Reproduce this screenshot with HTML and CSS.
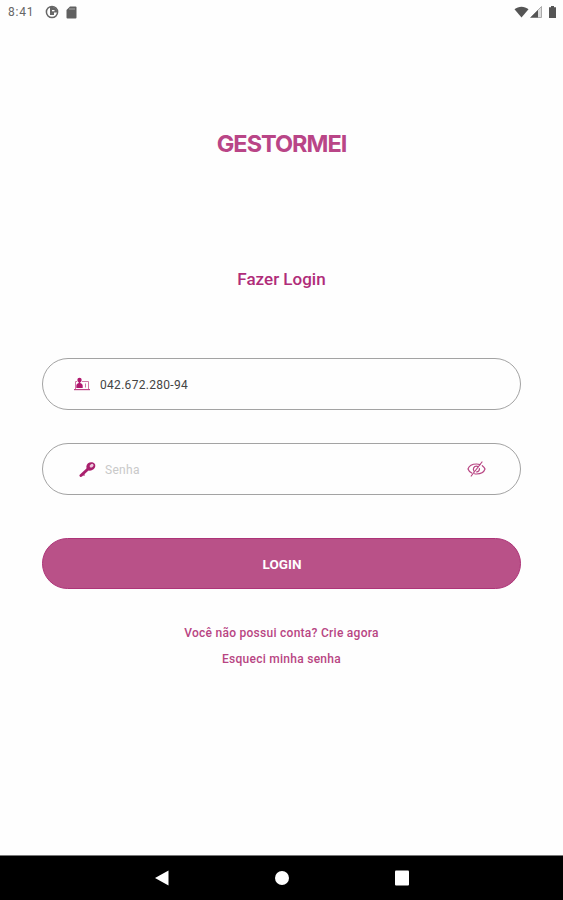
FILE: index.html
```html
<!DOCTYPE html>
<html lang="pt-BR">
<head>
  <meta charset="UTF-8">
  <title>GestorMEI - Login</title>
  <meta name="viewport" content="width=device-width, initial-scale=1.0">
  <link rel="stylesheet" href="styles.css">
</head>
<body>

<!-- Status bar -->
<header class="status-bar">
  <span class="clock">8:41</span>
  <svg class="status-app" width="14" height="14" viewBox="0 0 14 14">
    <circle cx="7" cy="7" r="5.600" fill="none" stroke="#666" stroke-width="1.500"/>
    <path d="M5 2h3a5 5 0 0 1 4 5.500H9V10H5z" fill="#666"/>
    <path d="M7 5h2.500v1.300H7z" fill="#fff"/>
  </svg>
  <svg class="status-card" width="11" height="13" viewBox="0 0 11 13">
    <path d="M4 .5h5.500a1 1 0 0 1 1 1v10a1 1 0 0 1-1 1h-8a1 1 0 0 1-1-1V4z" fill="#606060"/>
    <path d="M4 2v2M6 2v2M8 2v2" stroke="#bbb" stroke-width=".8"/>
  </svg>
  <div class="status-right">
    <svg width="15" height="12" viewBox="0 0 15 12">
      <path d="M.5 3.200C4.500-.2 10.500-.2 14.500 3.200L7.500 11.500z" fill="#555"/>
    </svg>
    <svg width="12" height="12" viewBox="0 0 12 12">
      <path d="M11.500.5v11H.5z" fill="#ddd" stroke="#999" stroke-width=".8"/>
      <path d="M8 4v7.500H.5z" fill="#555"/>
    </svg>
    <svg class="battery" width="7" height="12" viewBox="0 0 7 12">
      <path d="M2 0h3v1.200h2V12H0V1.200h2z" fill="#555"/>
    </svg>
  </div>
</header>

<!-- Login -->
<main class="login">
  <div class="logo">GESTORMEI</div>
  <h1>Fazer Login</h1>

  <form>
    <div class="field field-cpf">
      <svg width="16" height="14" viewBox="0 0 16 14">
        <path d="M3 4.500H1.500V12M8 4.500h6.500V12" fill="none" stroke="#cf78a6"/>
        <path d="M0 12h16v1.200H0z" fill="#bd4586"/>
        <circle cx="5.500" cy="3" r="2.200" fill="#b0186f"/>
        <path d="M2.300 11V8.500Q2.300 6.500 4.700 6V4h1.600v2q2.400.5 2.400 2.500V11z" fill="#b0186f"/>
        <path d="M11.500 6.500v4" stroke="#cf78a6"/>
      </svg>
      <input type="text" value="042.672.280-94">
    </div>

    <div class="field field-password">
      <svg width="17" height="17" viewBox="0 0 17 17">
        <path d="M9 8L2 14.500" fill="none" stroke="#a9206d" stroke-width="3" stroke-linecap="round"/>
        <path d="M4.500 13.500l1 1" fill="none" stroke="#a9206d" stroke-width="1.500"/>
        <path d="M9 2.300c2-1.600 5-1.400 6.500.2s.9 4.300-1 5.800-4.300 1.900-6 .5S7 4 9 2.300z" fill="#a9206d"/>
        <ellipse cx="12.600" cy="4.700" rx="2.100" ry="1.600" transform="rotate(-35 12.600 4.700)" fill="#edc9dc"/>
      </svg>
      <input type="password" placeholder="Senha">
      <svg class="eye" width="19" height="16" viewBox="0 0 19 16">
        <g fill="none" stroke="#b84583" stroke-width="1.200" stroke-linecap="round">
          <path d="M4.800 12C2.800 11 1.500 9.500 1 8c1-2.900 4.400-5 8.500-5 1.300 0 2.400.2 3.500.6"/>
          <path d="M15.300 4.700C16.600 5.600 17.600 6.800 18 8c-1 2.900-4.400 5-8.500 5-.7 0-1.300 0-1.900-.2"/>
          <path d="M7 10.200C5.500 8 6.800 5.200 9.500 5.200c.7 0 1.200.2 1.700.5M12.400 7.500c.3 1.800-1 3.300-2.700 3.400"/>
          <path d="M4.200 15L15 1"/>
        </g>
      </svg>
    </div>

    <button type="button">LOGIN</button>
  </form>

  <a class="link" href="#">Você não possui conta? Crie agora</a>
  <a class="link" href="#">Esqueci minha senha</a>
</main>

<!-- Android navigation -->
<nav class="nav-bar">
  <svg width="16" height="18" viewBox="0 0 16 18"><path d="M14.500 1.500v15L1 9z" fill="#fff"/></svg>
  <svg width="16" height="18" viewBox="0 0 16 18"><circle cx="8" cy="9" r="7" fill="#fff"/></svg>
  <svg width="16" height="18" viewBox="0 0 16 18"><rect x="1" y="1.500" width="14" height="15" rx="1" fill="#fff"/></svg>
</nav>

</body>
</html>
```
FILE: styles.css
```css
/* Global styles */
* {
  box-sizing: border-box;
}

body {
  font-family: Roboto, sans-serif;
  margin: 0;
  height: 900px;
  display: flex;
  flex-direction: column;
  background: #fefefe;
  overflow: hidden;
}

svg {
  display: block;
  flex: none;
}

/* Status bar */
.status-bar {
  display: flex;
  align-items: center;
  height: 24px;
  padding: 0 7px 0 8px;
  color: #666;
}

.clock {
  width: 37px;
  font-size: 12px;
  letter-spacing: 0.8px;
}

.status-card {
  margin-left: 7px;
}

.status-right {
  display: flex;
  align-items: center;
  gap: 1px;
  margin-left: auto;
}

.battery {
  margin-left: 6px;
}

/* Login */
.login {
  flex: 1;
  padding: 105px 42px 0;
  text-align: center;
}

.logo {
  font-family: Inter, sans-serif;
  font-size: 23.5px;
  line-height: 30px;
  font-weight: 700;
  letter-spacing: -1px;
  color: #b94587;
}

h1 {
  margin: 108px 0 0;
  font-size: 17px;
  line-height: 24px;
  font-weight: 500;
  color: #b02c79;
}

form {
  margin-top: 67px;
}

.field {
  display: flex;
  align-items: center;
  height: 52px;
  margin-bottom: 33px;
  padding: 0 34px 0 31px;
  border: 1px solid #a3a3a3;
  border-radius: 26px;
}

.field-password {
  padding-left: 36px;
  margin-bottom: 43px;
}

input {
  flex: 1;
  min-width: 0;
  margin: 1px 0 0 9px;
  padding: 0;
  border: none;
  outline: none;
  background: none;
  font-family: inherit;
  font-size: 12px;
  letter-spacing: 0.3px;
  color: #444;
}

.field-cpf input {
  margin-left: 10px;
}

input::placeholder {
  color: #c9c9c9;
}

button {
  display: block;
  width: 100%;
  height: 51px;
  padding: 1px 0 0 1px;
  border: 1px solid #ad3478;
  border-radius: 26px;
  background: #b95188;
  color: #fff;
  font-family: inherit;
  font-size: 13.5px;
  font-weight: 700;
}

.link {
  display: block;
  margin-top: 10px;
  font-size: 12px;
  line-height: 16px;
  font-weight: 500;
  letter-spacing: 0.27px;
  color: #b84583;
  text-decoration: none;
}

form + .link {
  margin-top: 36px;
}

/* Navigation bar */
.nav-bar {
  display: flex;
  align-items: center;
  justify-content: center;
  gap: 104px;
  height: 45px;
  border-top: 1px solid #777;
  background: #000;
}
```
